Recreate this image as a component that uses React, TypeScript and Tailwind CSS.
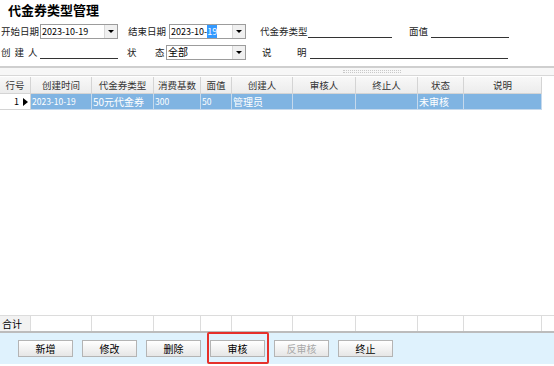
import React from "react";

const font = { fontFamily: '"Noto Sans CJK SC", "Liberation Sans", sans-serif' };

const cols = [
  { t: "行号", w: "w-[31px]" },
  { t: "创建时间", w: "w-[61px]" },
  { t: "代金券类型", w: "w-[62px]" },
  { t: "消费基数", w: "w-[47px]" },
  { t: "面值", w: "w-[31px]" },
  { t: "创建人", w: "w-[61px]" },
  { t: "审核人", w: "w-[63px]" },
  { t: "终止人", w: "w-[62px]" },
  { t: "状态", w: "w-[46px]" },
  { t: "说明", w: "w-[78px]" },
];

const rowVals = ["", "2023-10-19", "50元代金券", "300", "50", "管理员", "", "", "未审核", ""];

function Select({ w, children }: { w: string; children: React.ReactNode }) {
  return (
    <div className={`${w} h-[15px] border border-[#9c9c9c] bg-white flex items-center`}>
      <div className="flex-1 pl-[1px] text-[9px] leading-[13px] text-black overflow-hidden whitespace-nowrap">{children}</div>
      <div className="w-[13px] h-[13px] bg-[#f0f0f0] border-l border-[#d8d8d8] flex items-center justify-center">
        <div className="w-0 h-0 border-l-[3px] border-r-[3px] border-t-[3px] border-l-transparent border-r-transparent border-t-black" />
      </div>
    </div>
  );
}

function Btn({ label, disabled }: { label: string; disabled?: boolean }) {
  return (
    <div
      className={`w-[55px] h-[17px] border border-[#b4b4b4] bg-gradient-to-b from-white to-[#e6e6e6] flex items-center justify-center text-[10px] ${
        disabled ? "text-[#a8a8a8]" : "text-black"
      }`}
    >
      {label}
    </div>
  );
}

export default function App() {
  return (
    <div className="w-[554px] h-[366px] bg-white flex flex-col overflow-hidden" style={font}>
      <div className="h-[23px] pl-[8px] pt-[2px] text-[13px] font-bold text-black leading-[16px] whitespace-nowrap">代金券类型管理</div>

      <div className="h-[16px] flex items-center text-[9.5px] text-[#222] whitespace-nowrap">
        <span className="w-[40px] pl-[1px]">开始日期</span>
        <Select w="w-[78px]">2023-10-19</Select>
        <span className="w-[51px] pl-[10px]">结束日期</span>
        <Select w="w-[77px]">
          2023-10-<span className="bg-[#3399ff] text-white">19</span>
        </Select>
        <span className="ml-[14px] w-[48px]">代金券类型</span>
        <div className="w-[84px] h-[14px] border-b border-[#333]" />
        <span className="ml-[17px] w-[22px]">面值</span>
        <div className="w-[78px] h-[14px] border-b border-[#333]" />
      </div>

      <div className="h-[16px] mt-[5px] flex items-center text-[9.5px] text-[#222] whitespace-nowrap">
        <span className="w-[40px] pl-[1px] tracking-[4px]">创建人</span>
        <div className="w-[78px] h-[14px] border-b border-[#333]" />
        <span className="ml-[9px] w-[28px]">状</span>
        <span className="w-[11px]">态</span>
        <Select w="w-[80px]">
          <span className="text-[10px]">全部</span>
        </Select>
        <span className="ml-[16px] w-[35px]">说</span>
        <span className="w-[13px]">明</span>
        <div className="w-[198px] h-[14px] border-b border-[#333]" />
      </div>

      <div className="mt-[6px] h-[10px] border-t-2 border-[#cfcfcf] border-b border-b-[#d8d8d8] bg-[#f7f7f7] flex items-center justify-center">
        <div className="ml-[190px] w-[58px] h-[3px] border-y border-dotted border-[#c9c9c9]" />
      </div>

      <div className="flex-1 flex flex-col">
        <div className="flex h-[17px] mt-[1px]">
          {cols.map((c) => (
            <div
              key={c.t}
              className={`${c.w} border-r border-b border-[#d4d4d4] bg-gradient-to-b from-[#f8f8f8] to-[#ececec] flex items-center justify-center text-[9.5px] text-[#333] whitespace-nowrap`}
            >
              {c.t}
            </div>
          ))}
        </div>
        <div className="flex h-[16px]">
          {cols.map((c, i) =>
            i === 0 ? (
              <div key={i} className={`${c.w} border-r border-b border-[#d4d4d4] bg-white flex items-center justify-end pr-[2px] text-[9px] text-black gap-[4px]`}>
                <span>1</span>
                <div className="w-0 h-0 border-t-[4px] border-b-[4px] border-l-[5px] border-t-transparent border-b-transparent border-l-black" />
              </div>
            ) : (
              <div key={i} className={`${c.w} border-r border-b border-[#c6d9ec] bg-[#80b4e2] flex items-center pl-[1px] text-white whitespace-nowrap ${i === 1 || i === 3 || i === 4 ? "text-[8.5px]" : "text-[10px]"}`}>
                {rowVals[i]}
              </div>
            )
          )}
        </div>
        <div className="flex-1" />
        <div className="flex h-[16px] border-t border-[#dcdcdc]">
          {cols.map((c, i) => (
            <div key={i} className={`${c.w} border-r border-[#dcdcdc] ${i === 0 ? "bg-[#f2f2f2]" : "bg-white"} flex items-center pl-[2px] text-[10px] text-black`}>
              {i === 0 ? "合计" : ""}
            </div>
          ))}
        </div>
      </div>

      <div className="h-[33px] mb-[2px] border-t-2 border-[#bcbcbc] bg-[#dff2fd] flex items-center pl-[18px] gap-[9px]">
        <Btn label="新增" />
        <Btn label="修改" />
        <Btn label="删除" />
        <div className="relative">
          <Btn label="审核" />
          <div className="absolute -left-[3px] -top-[8px] w-[62px] h-[32px] border-2 border-[#e5302b] rounded-[2px]" />
        </div>
        <Btn label="反审核" disabled />
        <Btn label="终止" />
      </div>
    </div>
  );
}
